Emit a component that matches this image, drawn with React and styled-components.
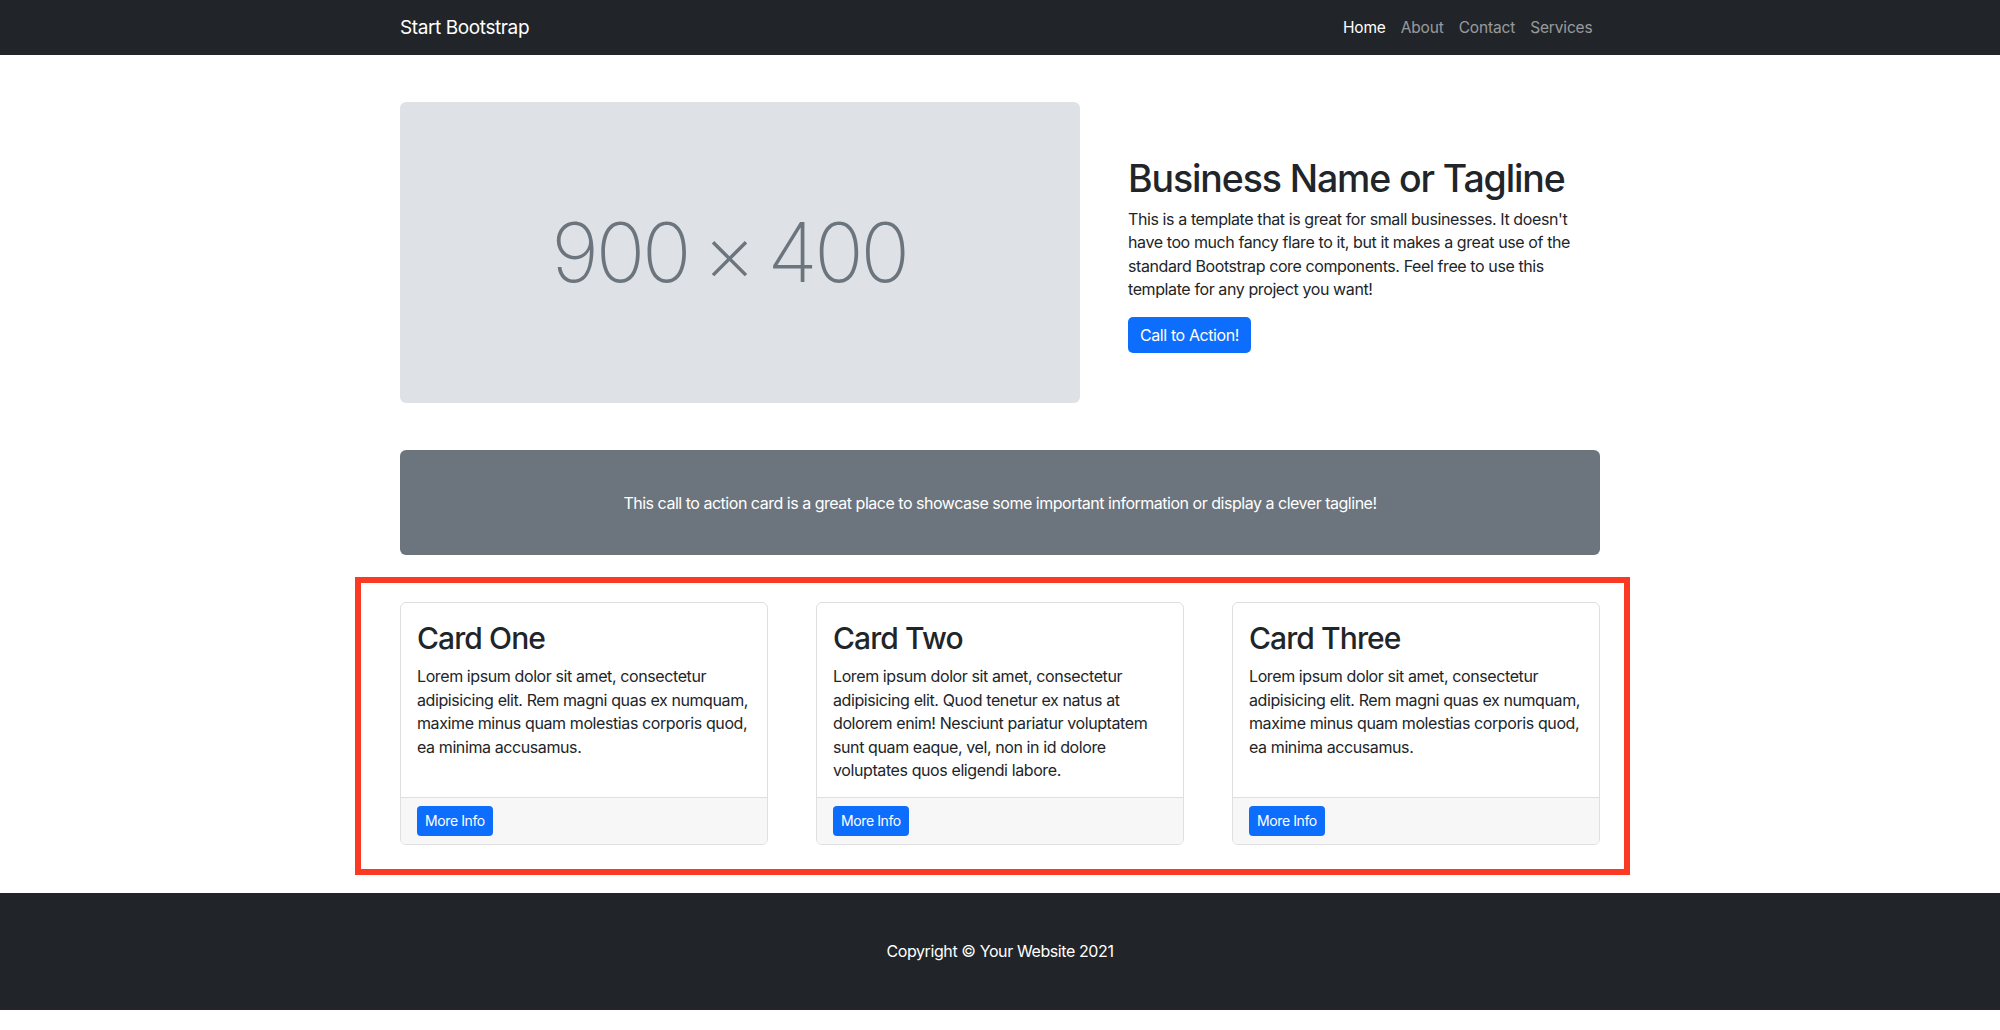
import React from "react";
import styled, { createGlobalStyle } from "styled-components";

const GlobalStyle = createGlobalStyle`
  body {
    margin: 0;
    background: #fff;
    color: #212529;
    font-family: Inter, "Noto Sans", "Liberation Sans", sans-serif;
    font-size: 16px;
    letter-spacing: -0.025em;
  }
`;

const NavBar = styled.nav`
  height: 55px;
  background: #212529;
`;

const NavInner = styled.div`
  width: 1200px;
  height: 100%;
  margin: 0 auto;
  display: flex;
  align-items: center;
  justify-content: space-between;
`;

const Brand = styled.a`
  color: #fff;
  font-size: 19px;
  text-decoration: none;
`;

const NavLinks = styled.ul`
  display: flex;
  margin: 0;
  padding: 0;
  list-style: none;
`;

const NavLink = styled.a`
  display: block;
  padding: 0 7.5px;
  font-size: 15.5px;
  letter-spacing: -0.01em;
  text-decoration: none;
  color: ${(p) => (p.$active ? "#fff" : "rgba(255, 255, 255, 0.55)")};
`;

const Container = styled.main`
  width: 1200px;
  margin: 0 auto;
`;

const Hero = styled.section`
  display: grid;
  grid-template-columns: 680px 472px;
  column-gap: 48px;
  align-items: center;
  margin: 47px 0 47px;
`;

const Placeholder = styled.div`
  height: 301px;
  padding-right: 22px;
  border-radius: 6px;
  background: #dee2e6;
  display: flex;
  align-items: center;
  justify-content: center;
  color: #6c757d;
  font-size: 82px;
  font-weight: 200;
  letter-spacing: -0.04em;
  word-spacing: -0.06em;
`;

const HeroText = styled.div`
  padding-top: 3px;
  h1 {
    margin: 0 0 7px;
    font-size: 37.5px;
    font-weight: 500;
    line-height: 1.2;
    letter-spacing: -0.03em;
  }
  p {
    margin: 0 0 15px;
    line-height: 23.5px;
  }
`;

const Button = styled.a`
  display: inline-block;
  height: 36px;
  padding: 0 12px;
  line-height: 36px;
  border-radius: 5px;
  background: #0d6efd;
  color: #fff;
  font-size: ${(p) => (p.$small ? "14px" : "16px")};
  text-decoration: none;
  ${(p) =>
    p.$small &&
    `
    height: 30px;
    line-height: 30px;
    padding: 0 8px;
    border-radius: 4px;
  `}
`;

const Callout = styled.div`
  height: 105px;
  margin-bottom: 47px;
  border-radius: 6px;
  background: #6c757d;
  color: #fff;
  letter-spacing: -0.03em;
  display: flex;
  align-items: center;
  justify-content: center;
`;

const CardRow = styled.section`
  position: relative;
  display: grid;
  grid-template-columns: repeat(3, 1fr);
  column-gap: 48px;
  margin-bottom: 48px;
`;

const Highlight = styled.span`
  position: absolute;
  left: -45px;
  top: -25px;
  right: -30px;
  bottom: -30px;
  border: 6px solid #fa3a22;
  pointer-events: none;
`;

const Card = styled.article`
  display: flex;
  flex-direction: column;
  border: 1px solid #dfdfdf;
  border-radius: 6px;
  overflow: hidden;
`;

const CardBody = styled.div`
  flex: 1;
  padding: 17px 16px 14px;
`;

const CardTitle = styled.h2`
  margin: 0 0 9px;
  font-size: 30px;
  font-weight: 500;
  line-height: 1.2;
  letter-spacing: -0.03em;
`;

const CardText = styled.p`
  margin: 0;
  line-height: 23.5px;
`;

const CardFooter = styled.div`
  padding: 8px 16px;
  border-top: 1px solid #dfdfdf;
  background: #f7f7f7;
`;

const Footer = styled.footer`
  padding: 46px 0 47px;
  background: #212529;
  color: #fff;
  text-align: center;
  line-height: 24px;
`;

const links = ["Home", "About", "Contact", "Services"];

const cards = [
  {
    title: "Card One",
    text: "Lorem ipsum dolor sit amet, consectetur adipisicing elit. Rem magni quas ex numquam, maxime minus quam molestias corporis quod, ea minima accusamus.",
  },
  {
    title: "Card Two",
    text: "Lorem ipsum dolor sit amet, consectetur adipisicing elit. Quod tenetur ex natus at dolorem enim! Nesciunt pariatur voluptatem sunt quam eaque, vel, non in id dolore voluptates quos eligendi labore.",
  },
  {
    title: "Card Three",
    text: "Lorem ipsum dolor sit amet, consectetur adipisicing elit. Rem magni quas ex numquam, maxime minus quam molestias corporis quod, ea minima accusamus.",
  },
];

const App = () => {
  return (
    <>
      <GlobalStyle />
      <NavBar>
        <NavInner>
          <Brand href="#!">Start Bootstrap</Brand>
          <NavLinks>
            {links.map((l, i) => (
              <li key={l}>
                <NavLink href="#!" $active={i === 0}>
                  {l}
                </NavLink>
              </li>
            ))}
          </NavLinks>
        </NavInner>
      </NavBar>
      <Container>
        <Hero>
          <Placeholder>900 × 400</Placeholder>
          <HeroText>
            <h1>Business Name or Tagline</h1>
            <p>
              This is a template that is great for small businesses. It doesn't
              have too much fancy flare to it, but it makes a great use of the
              standard Bootstrap core components. Feel free to use this template
              for any project you want!
            </p>
            <Button href="#!">Call to Action!</Button>
          </HeroText>
        </Hero>
        <Callout>
          This call to action card is a great place to showcase some important
          information or display a clever tagline!
        </Callout>
        <CardRow>
          {cards.map((c) => (
            <Card key={c.title}>
              <CardBody>
                <CardTitle>{c.title}</CardTitle>
                <CardText>{c.text}</CardText>
              </CardBody>
              <CardFooter>
                <Button href="#!" $small>
                  More Info
                </Button>
              </CardFooter>
            </Card>
          ))}
          <Highlight />
        </CardRow>
      </Container>
      <Footer>Copyright © Your Website 2021</Footer>
    </>
  );
};

export default App;
